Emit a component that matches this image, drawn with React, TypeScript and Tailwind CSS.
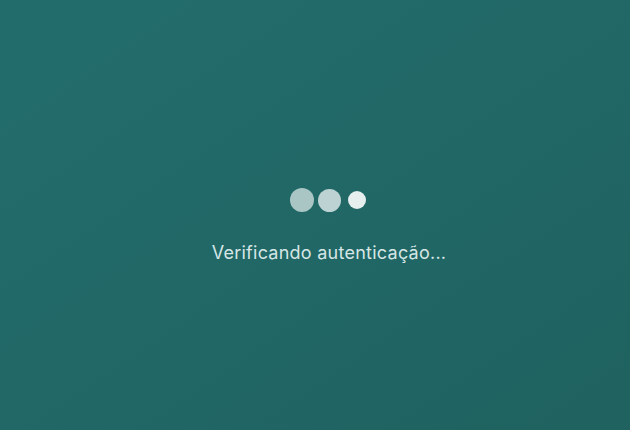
export default function App() {
  return (
    <div
      className="w-[630px] h-[430px] flex flex-col items-center justify-start pt-[188px] pl-[28px] bg-gradient-to-br from-[#226d6c] to-[#1f6260]"
      style={{ fontFamily: "Inter, 'Noto Sans', sans-serif" }}
    >
      <div className="flex items-center gap-1 h-6 mr-[3px]">
        <div className="w-6 h-6 rounded-full bg-[#a9c6c5]" />
        <div className="w-[23px] h-[23px] rounded-full bg-[#bdd3d3]" />
        <div className="w-[18px] h-[18px] rounded-full bg-[#e6eeee] ml-[3px]" />
      </div>
      <p className="mt-[27px] text-[18px] leading-[28px] text-[#d6e6e5] tracking-[0.25px]">
        Verificando autenticação...
      </p>
    </div>
  );
}
